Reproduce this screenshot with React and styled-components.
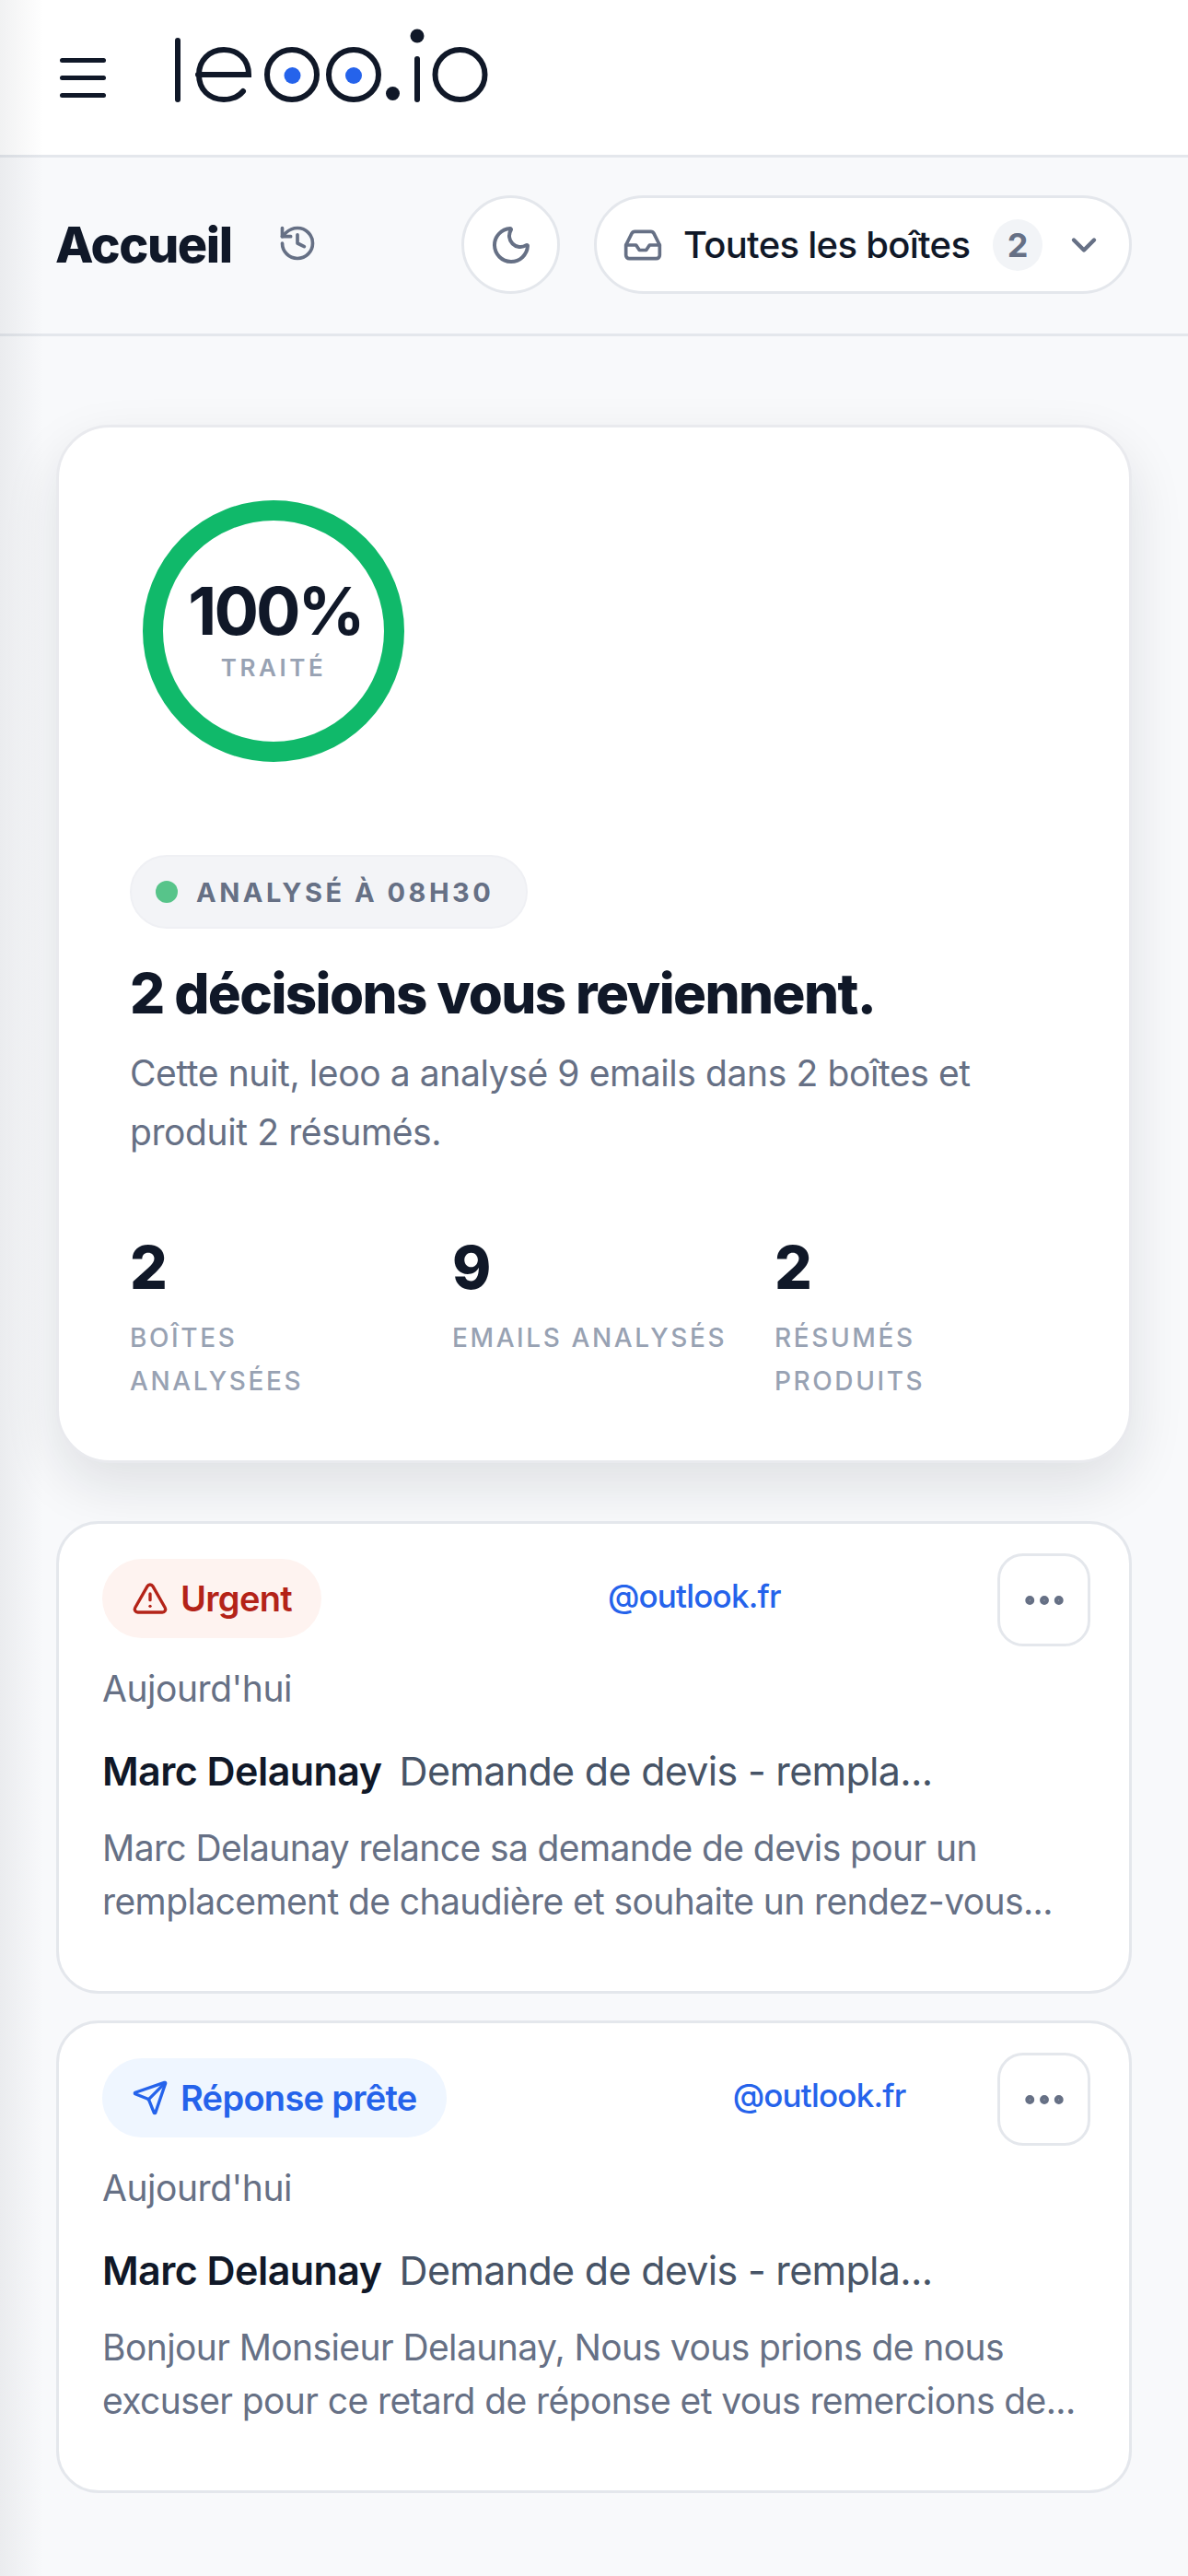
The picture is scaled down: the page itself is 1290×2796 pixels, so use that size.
import React from "react";
import styled, { createGlobalStyle } from "styled-components";
import { AlertTriangle, ChevronDown, History, Inbox, Moon, MoreHorizontal, Send } from "lucide-react";

const GlobalStyle = createGlobalStyle`
  html, body {
    margin: 0;
    padding: 0;
    background: #f8f9fb;
  }
  * { box-sizing: border-box; }
  body {
    font-family: "Inter", "Liberation Sans", sans-serif;
    color: #101828;
  }
`;

const Page = styled.div`
  position: relative;
  width: 1290px;
  height: 2796px;
  overflow: hidden;
  background: #f8f9fb;

  &::after {
    content: "";
    position: absolute;
    inset: 0 auto 0 0;
    width: 48px;
    background: linear-gradient(90deg, rgba(17, 24, 39, 0.06), rgba(17, 24, 39, 0));
    pointer-events: none;
  }
`;

const TopBar = styled.header`
  height: 171px;
  background: #fff;
  border-bottom: 3px solid #e4e7ec;
  display: flex;
  align-items: center;
  gap: 73px;
  padding: 0 0 18px 65px;
`;

const MenuIcon = styled.div`
  width: 50px;
  display: flex;
  flex-direction: column;
  gap: 14px;
  margin-top: 18px;

  span {
    height: 5px;
    border-radius: 3px;
    background: #101828;
  }
`;

const SubBar = styled.div`
  height: 194px;
  border-bottom: 3px solid #e4e7ec;
  display: flex;
  align-items: center;
  padding: 0 61px 2px 60px;
`;

const Title = styled.h1`
  margin: 0;
  font-size: 54px;
  font-weight: 800;
  letter-spacing: -1.4px;
  color: #101828;
`;

const HistoryButton = styled.span`
  display: flex;
  margin: -4px 0 0 49px;
  color: #667085;
`;

const Controls = styled.div`
  margin-left: auto;
  display: flex;
  align-items: center;
  gap: 37px;
`;

const RoundButton = styled.button`
  width: 107px;
  height: 107px;
  border-radius: 50%;
  border: 3px solid #e4e7ec;
  background: #fff;
  color: #667085;
  padding: 0;
  display: flex;
  align-items: center;
  justify-content: center;
`;

const BoxSelect = styled.button`
  width: 584px;
  height: 107px;
  border-radius: 54px;
  border: 3px solid #e4e7ec;
  background: #fff;
  display: flex;
  align-items: center;
  padding: 0 27px 0 28px;
  font-family: inherit;
  color: #667085;
`;

const BoxLabel = styled.span`
  margin-left: 22px;
  font-size: 40px;
  font-weight: 500;
  letter-spacing: -0.7px;
  color: #101828;
`;

const CountBadge = styled.span`
  width: 54px;
  height: 56px;
  margin-left: auto;
  margin-right: 23px;
  border-radius: 50%;
  background: #f2f4f7;
  display: flex;
  align-items: center;
  justify-content: center;
  font-size: 36px;
  font-weight: 700;
  color: #667085;
`;

const Content = styled.main`
  padding: 96px 61px 0 61px;
`;

const SummaryCard = styled.section`
  height: 1127px;
  background: #fff;
  border: 3px solid #e9eaee;
  border-radius: 58px;
  box-shadow: 0 24px 60px rgba(16, 24, 40, 0.11);
  padding: 79px 77px 0;
  margin-bottom: 63px;
`;

const Ring = styled.div`
  width: 284px;
  height: 284px;
  margin-left: 14px;
  border: 22px solid #10b96a;
  border-radius: 50%;
  display: flex;
  flex-direction: column;
  align-items: center;
`;

const RingValue = styled.div`
  margin-top: 60px;
  padding-left: 4px;
  font-size: 72px;
  line-height: 76px;
  font-weight: 700;
  letter-spacing: -3px;
  color: #101828;
`;

const RingLabel = styled.div`
  margin-top: 8px;
  font-size: 26px;
  line-height: 32px;
  font-weight: 600;
  letter-spacing: 3.6px;
  color: #98a2b3;
`;

const StatusChip = styled.div`
  display: inline-flex;
  align-items: center;
  height: 80px;
  margin-top: 101px;
  padding: 0 35px 0 26px;
  border-radius: 40px;
  border: 2px solid #eff0f4;
  background: #f3f4f7;
  font-size: 29px;
  font-weight: 700;
  letter-spacing: 3.5px;
  color: #667085;
`;

const StatusDot = styled.span`
  width: 24px;
  height: 24px;
  margin-right: 20px;
  border-radius: 50%;
  background: #57c48a;
`;

const Headline = styled.h2`
  margin: 34px 0 0;
  font-size: 60px;
  line-height: 72px;
  font-weight: 800;
  letter-spacing: -1.6px;
  color: #101828;
`;

const Lead = styled.p`
  margin: 19px 0 0;
  width: 960px;
  font-size: 39px;
  line-height: 64px;
  letter-spacing: -0.4px;
  color: #667085;
`;

const Stats = styled.div`
  display: grid;
  grid-template-columns: repeat(3, 350px);
  margin-top: 75px;
`;

const StatValue = styled.div`
  font-size: 64px;
  line-height: 80px;
  font-weight: 800;
  color: #101828;
`;

const StatLabel = styled.div`
  margin-top: 13px;
  width: 300px;
  font-size: 28px;
  line-height: 47px;
  font-weight: 500;
  letter-spacing: 2.6px;
  color: #98a2b3;
`;

const MailList = styled.div`
  display: flex;
  flex-direction: column;
  gap: 29px;
`;

const MailCard = styled.article`
  height: 513px;
  background: #fff;
  border: 3px solid #e4e7ec;
  border-radius: 46px;
  padding: 32px 42px 0 47px;
`;

const MailHead = styled.div`
  display: flex;
  align-items: center;
  height: 101px;
`;

const TagPill = styled.span`
  display: flex;
  align-items: center;
  gap: 13px;
  height: 86px;
  margin-top: -4px;
  padding: 0 32px;
  border-radius: 43px;
  background: ${(props) => (props.$urgent ? "#fef3f0" : "#eff6ff")};
  color: ${(props) => (props.$urgent ? "#b42318" : "#2563eb")};
  font-size: 38px;
  font-weight: 600;
  letter-spacing: -0.7px;
`;

const MailBox = styled.span`
  margin: 0 0 10px 311px;
  font-size: 35px;
  font-weight: 500;
  letter-spacing: -0.8px;
  color: #2563eb;
`;

const DotsButton = styled.button`
  width: 101px;
  height: 101px;
  margin-left: auto;
  padding: 0;
  border: 3px solid #e4e7ec;
  border-radius: 28px;
  background: #fff;
  color: #667085;
  display: flex;
  align-items: center;
  justify-content: center;
`;

const MailDate = styled.div`
  margin-top: 22px;
  font-size: 39px;
  line-height: 48px;
  letter-spacing: -0.45px;
  color: #667085;
`;

const MailLine = styled.div`
  margin-top: 37px;
  display: flex;
  gap: 19px;
  font-size: 43px;
  line-height: 56px;
  white-space: nowrap;
`;

const Sender = styled.span`
  font-weight: 600;
  letter-spacing: -0.55px;
  color: #101828;
`;

const Subject = styled.span`
  letter-spacing: -0.7px;
  color: #475467;
`;

const Preview = styled.p`
  margin: 27px 0 0;
  font-size: 39px;
  line-height: 58px;
  letter-spacing: -0.6px;
  color: #667085;
`;

const LogoMark = () => (
  <svg width="345" height="90" viewBox="188 30 345 90" fill="none" stroke="#101828" strokeWidth="6" strokeLinecap="round">
    <path d="M193 44V108" />
    <path d="M215 81H270C270 64 258 54 243 54C227 54 216 66 216 81C216 97 227 108 243 108C252 108 259 105 264 99" />
    <circle cx="317" cy="81" r="27" />
    <circle cx="384" cy="81" r="27" />
    <circle cx="499.5" cy="81" r="27" />
    <path d="M453 64V108" />
    <g fill="#101828" stroke="none">
      <circle cx="426.5" cy="101.5" r="7.5" />
      <circle cx="453" cy="39" r="7.5" />
    </g>
    <g fill="#2563eb" stroke="none">
      <circle cx="317.5" cy="82" r="9" />
      <circle cx="384" cy="82" r="9" />
    </g>
  </svg>
);

const mails = [
  {
    id: 1,
    urgent: true,
    label: "Urgent",
    preview: "Marc Delaunay relance sa demande de devis pour un remplacement de chaudière et souhaite un rendez-vous...",
  },
  {
    id: 2,
    urgent: false,
    label: "Réponse prête",
    preview: "Bonjour Monsieur Delaunay, Nous vous prions de nous excuser pour ce retard de réponse et vous remercions de...",
  },
];

const stats = [
  { value: "2", label: "BOÎTES ANALYSÉES" },
  { value: "9", label: "EMAILS ANALYSÉS" },
  { value: "2", label: "RÉSUMÉS PRODUITS" },
];

const App = () => (
  <Page>
    <GlobalStyle />
    <TopBar>
      <MenuIcon>
        <span />
        <span />
        <span />
      </MenuIcon>
      <LogoMark />
    </TopBar>
    <SubBar>
      <Title>Accueil</Title>
      <HistoryButton>
        <History size={44} strokeWidth={2} />
      </HistoryButton>
      <Controls>
        <RoundButton type="button">
          <Moon size={48} strokeWidth={2} />
        </RoundButton>
        <BoxSelect type="button">
          <Inbox size={44} strokeWidth={2} />
          <BoxLabel>Toutes les boîtes</BoxLabel>
          <CountBadge>2</CountBadge>
          <ChevronDown size={44} strokeWidth={2.4} />
        </BoxSelect>
      </Controls>
    </SubBar>
    <Content>
      <SummaryCard>
        <Ring>
          <RingValue>100%</RingValue>
          <RingLabel>TRAITÉ</RingLabel>
        </Ring>
        <StatusChip>
          <StatusDot />
          ANALYSÉ À 08H30
        </StatusChip>
        <Headline>2 décisions vous reviennent.</Headline>
        <Lead>Cette nuit, leoo a analysé 9 emails dans 2 boîtes et produit 2 résumés.</Lead>
        <Stats>
          {stats.map((stat) => (
            <div key={stat.label}>
              <StatValue>{stat.value}</StatValue>
              <StatLabel>{stat.label}</StatLabel>
            </div>
          ))}
        </Stats>
      </SummaryCard>
      <MailList>
        {mails.map((mail) => (
          <MailCard key={mail.id}>
            <MailHead>
              <TagPill $urgent={mail.urgent}>
                {mail.urgent ? <AlertTriangle size={40} strokeWidth={2} /> : <Send size={40} strokeWidth={2} />}
                {mail.label}
              </TagPill>
              <MailBox>@outlook.fr</MailBox>
              <DotsButton type="button">
                <MoreHorizontal size={54} strokeWidth={2.4} />
              </DotsButton>
            </MailHead>
            <MailDate>Aujourd'hui</MailDate>
            <MailLine>
              <Sender>Marc Delaunay</Sender>
              <Subject>Demande de devis - rempla...</Subject>
            </MailLine>
            <Preview>{mail.preview}</Preview>
          </MailCard>
        ))}
      </MailList>
    </Content>
  </Page>
);

export default App;
